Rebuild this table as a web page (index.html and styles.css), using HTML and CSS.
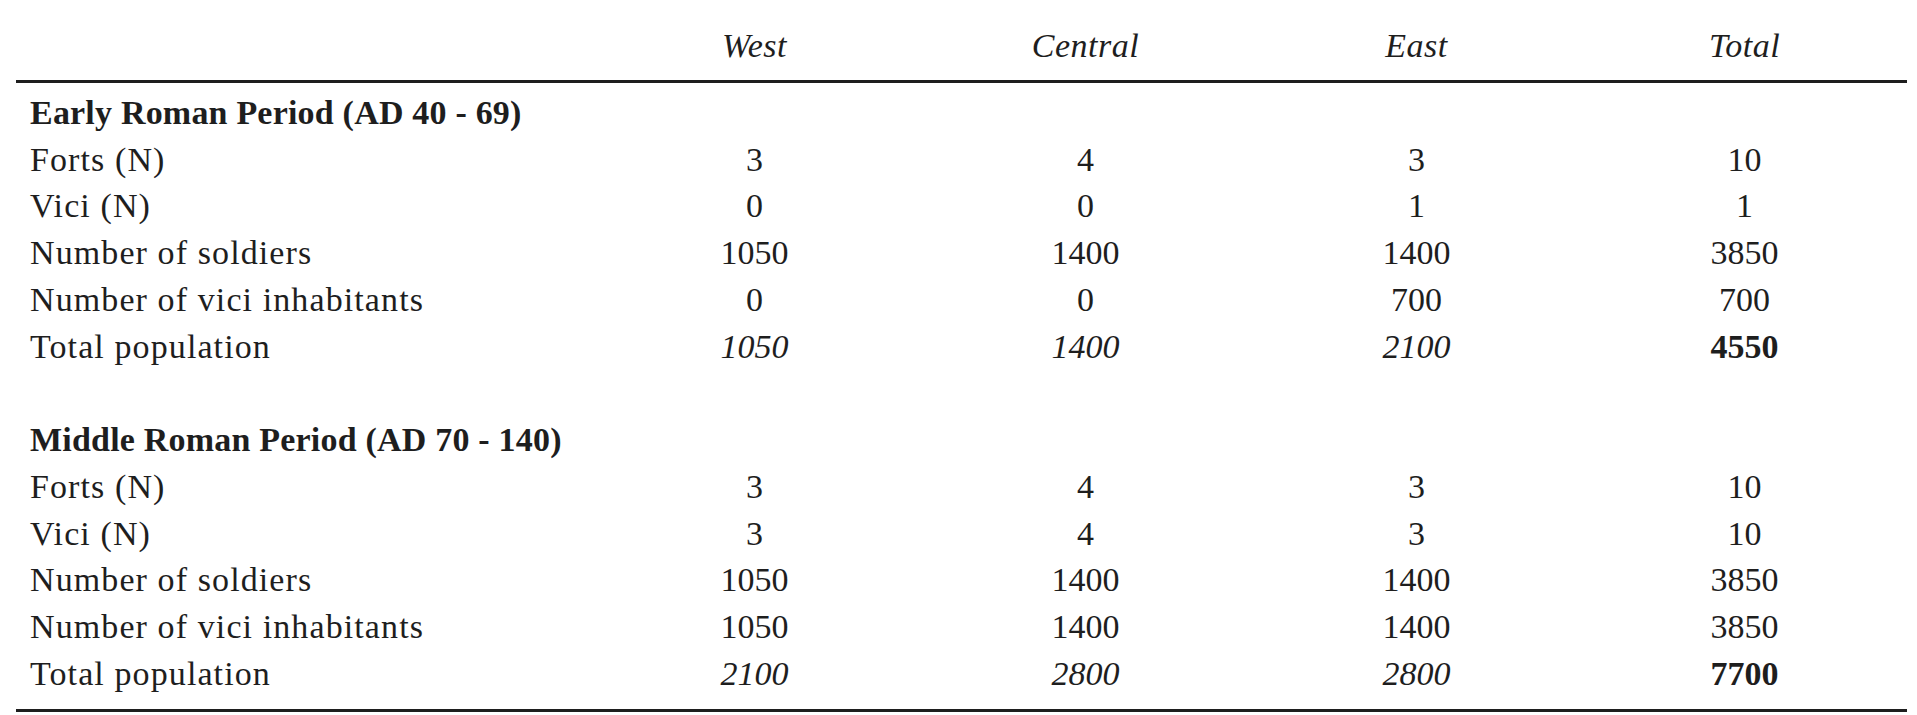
FILE: index.html
```html
<!DOCTYPE html>
<html lang="en">
<head>
<meta charset="utf-8">
<title>Population estimates</title>
<link rel="stylesheet" href="styles.css">
</head>
<body>
<table class="pop">
  <colgroup>
    <col class="c-label">
    <col class="c-num">
    <col class="c-num">
    <col class="c-num">
    <col class="c-last">
  </colgroup>
  <thead>
    <tr class="head">
      <th></th>
      <th>West</th>
      <th>Central</th>
      <th>East</th>
      <th>Total</th>
    </tr>
  </thead>
  <tbody>
    <tr class="period"><td colspan="5">Early Roman Period (AD 40 - 69)</td></tr>
    <tr><td>Forts (N)</td><td>3</td><td>4</td><td>3</td><td>10</td></tr>
    <tr><td>Vici (N)</td><td>0</td><td>0</td><td>1</td><td>1</td></tr>
    <tr><td>Number of soldiers</td><td>1050</td><td>1400</td><td>1400</td><td>3850</td></tr>
    <tr><td>Number of vici inhabitants</td><td>0</td><td>0</td><td>700</td><td>700</td></tr>
    <tr class="total"><td>Total population</td><td>1050</td><td>1400</td><td>2100</td><td>4550</td></tr>
    <tr class="blank"><td colspan="5"></td></tr>
    <tr class="period"><td colspan="5">Middle Roman Period (AD 70 - 140)</td></tr>
    <tr><td>Forts (N)</td><td>3</td><td>4</td><td>3</td><td>10</td></tr>
    <tr><td>Vici (N)</td><td>3</td><td>4</td><td>3</td><td>10</td></tr>
    <tr><td>Number of soldiers</td><td>1050</td><td>1400</td><td>1400</td><td>3850</td></tr>
    <tr><td>Number of vici inhabitants</td><td>1050</td><td>1400</td><td>1400</td><td>3850</td></tr>
    <tr class="total last"><td>Total population</td><td>2100</td><td>2800</td><td>2800</td><td>7700</td></tr>
  </tbody>
</table>
</body>
</html>
```
FILE: styles.css
```css
html, body {
  margin: 0;
  padding: 0;
  background: #ffffff;
}
body {
  padding: 0 10px 0 16px;
  font-family: "Liberation Serif", "DejaVu Serif", serif;
  font-size: 34px;
  color: #1e1e1e;
}
.pop {
  width: 1891px;
  border-collapse: collapse;
  table-layout: fixed;
}
.c-label { width: 573px; }
.c-num { width: 331px; }
.c-last { width: 325px; }

.pop th,
.pop td {
  padding: 0;
  text-align: center;
  line-height: 46.75px;
  height: 46.75px;
  white-space: nowrap;
}
.pop td:first-child,
.pop th:first-child {
  text-align: left;
  padding-left: 14px;
  letter-spacing: 1.1px;
}
.head th {
  font-weight: normal;
  font-style: italic;
  letter-spacing: 0.5px;
  padding-top: 23px;
  padding-bottom: 10px;
  border-bottom: 3px solid #1e1e1e;
}
.pop tbody tr:first-child td {
  padding-top: 7px;
}
.period td,
.period td:first-child {
  font-weight: bold;
  letter-spacing: 0.2px;
}
.total td {
  font-style: italic;
}
.total td:first-child {
  font-style: normal;
}
.total td:last-child {
  font-style: normal;
  font-weight: bold;
}
.last td {
  padding-bottom: 11px;
  border-bottom: 3px solid #1e1e1e;
}
```
